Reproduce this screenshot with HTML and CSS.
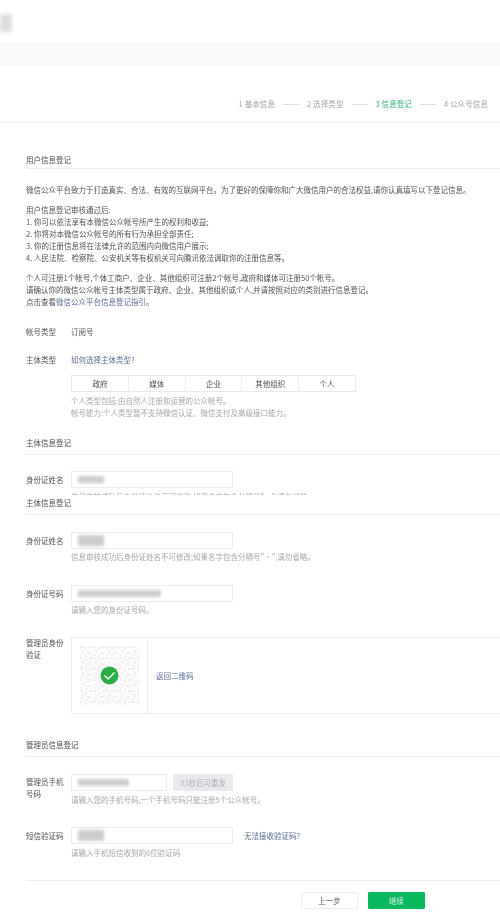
FILE: index.html
```html
<!DOCTYPE html>
<html lang="zh-CN">
<head>
<meta charset="utf-8">
<title>信息登记</title>
<link rel="stylesheet" href="styles.css">
</head>
<body>
<div class="page">
  <header class="head"><span class="logo"></span></header>
  <div class="band"></div>
  <nav class="steps">
    <span>1 基本信息</span><i></i>
    <span>2 选择类型</span><i></i>
    <span class="on">3 信息登记</span><i></i>
    <span>4 公众号信息</span>
  </nav>
  <main class="main">
    <h2 class="title first">用户信息登记</h2>
    <p class="para p1">微信公众平台致力于打造真实、合法、有效的互联网平台。为了更好的保障你和广大微信用户的合法权益,请你认真填写以下登记信息。</p>
    <p class="para p2">用户信息登记审核通过后:<br>1. 你可以依法享有本微信公众帐号所产生的权利和收益;<br>2. 你将对本微信公众帐号的所有行为承担全部责任;<br>3. 你的注册信息将在法律允许的范围内向微信用户展示;<br>4. 人民法院、检察院、公安机关等有权机关可向腾讯依法调取你的注册信息等。</p>
    <p class="para p2">个人可注册1个帐号,个体工商户、企业、其他组织可注册2个帐号,政府和媒体可注册50个帐号。<br>请确认你的微信公众帐号主体类型属于政府、企业、其他组织或个人,并请按照对应的类别进行信息登记。<br>点击查看<a class="link">微信公众平台信息登记指引</a>。</p>

    <div class="row r-type"><label>帐号类型</label><div>订阅号</div></div>
    <div class="row r-subject">
      <label>主体类型</label>
      <div class="col">
        <a class="link">如何选择主体类型?</a>
        <div class="tabs"><span>政府</span><span>媒体</span><span>企业</span><span>其他组织</span><span>个人</span></div>
        <p class="hint h3">个人类型包括:由自然人注册和运营的公众帐号。<br>帐号能力:个人类型暂不支持微信认证、微信支付及高级接口能力。</p>
      </div>
    </div>

    <section class="clip">
      <h2 class="title">主体信息登记</h2>
      <div class="row field f-clip"><label>身份证姓名</label>
        <div class="col"><div class="input"><span class="mask m-name"></span></div>
        <p class="hint h3">信息审核成功后身份证姓名不可修改;如果名字包含分隔号"·",请勿省略。</p></div>
      </div>
    </section>

    <section class="again">
      <h2 class="title">主体信息登记</h2>
      <div class="row field"><label>身份证姓名</label>
        <div class="col"><div class="input"><span class="mask m-tall"></span></div>
        <p class="hint h2">信息审核成功后身份证姓名不可修改;如果名字包含分隔号"·",请勿省略。</p></div>
      </div>
      <div class="row field f-next"><label>身份证号码</label>
        <div class="col"><div class="input"><span class="mask m-id"></span></div>
        <p class="hint h2">请输入您的身份证号码。</p></div>
      </div>
      <div class="row f-qr"><label class="lab-wrap">管理员身份验证</label>
        <div class="qrbox">
          <div class="qrcell">
            <svg class="qr" width="59" height="59" viewBox="0 0 59 59" aria-hidden="true">
              <defs><pattern id="noise" width="13" height="11" patternUnits="userSpaceOnUse">
                <rect x="0" y="0" width="3" height="2" fill="#eeeeee"/>
                <rect x="5" y="1" width="2" height="3" fill="#f1f1f1"/>
                <rect x="9" y="0" width="3" height="2" fill="#ececec"/>
                <rect x="2" y="4" width="2" height="3" fill="#efefef"/>
                <rect x="7" y="6" width="4" height="2" fill="#eeeeee"/>
                <rect x="0" y="8" width="3" height="2" fill="#f2f2f2"/>
                <rect x="5" y="9" width="2" height="2" fill="#efefef"/>
              </pattern></defs>
              <rect width="59" height="59" fill="#fbfbfb"/>
              <rect width="59" height="59" fill="url(#noise)"/>
              <circle cx="29.5" cy="29.5" r="9" fill="#2aae43"/>
              <path d="M24.5 29.5l3.6 3.4 6.4-6.4" fill="none" stroke="#fff" stroke-width="1.4"/>
            </svg>
          </div>
          <a class="link back">返回二维码</a>
        </div>
      </div>
    </section>

    <section class="admin">
      <h2 class="title">管理员信息登记</h2>
      <div class="row field"><label class="lab-wrap">管理员手机号码</label>
        <div class="col">
          <div class="phone"><div class="input short"><span class="mask m-phone"></span></div><span class="resend">33秒后可重发</span></div>
          <p class="hint h3">请输入您的手机号码,一个手机号码只能注册5个公众帐号。</p>
        </div>
      </div>
      <div class="row field f-sms"><label>短信验证码</label>
        <div class="col">
          <div class="phone"><div class="input"><span class="mask m-name tall"></span></div><a class="link nocode">无法接收验证码?</a></div>
          <p class="hint h3">请输入手机短信收到的6位验证码</p>
        </div>
      </div>
    </section>

    <footer class="foot">
      <button class="btn">上一步</button>
      <button class="btn primary">继续</button>
    </footer>
  </main>
</div>
</body>
</html>
```

FILE: styles.css
```css
* { box-sizing: border-box; }
html, body { margin: 0; padding: 0; background: #fff; }
.page {
  width: 500px;
  height: 917px;
  overflow: hidden;
  font: 7.5px/12px "Noto Sans CJK SC", "Liberation Sans", sans-serif;
  color: #505050;
  filter: blur(0.45px);
}
.head { height: 43px; padding-top: 14px; }
.logo { display: block; width: 12px; height: 18px; background: #ddd; filter: blur(2px); }
.band { height: 23px; background: #f7f8f9; }
.steps {
  height: 57px;
  padding: 32px 12px 0 0;
  display: flex;
  justify-content: flex-end;
  align-items: flex-start;
  gap: 8px;
  letter-spacing: 0.1px;
  color: #a3a3a3;
  border-bottom: 2px solid #f5f5f5;
}
.steps i { width: 16px; height: 1px; margin-top: 6px; background: #ddd; }
.steps .on { color: #2bb673; }
.main { padding-left: 26px; }
.title {
  margin: 0;
  font-size: 7.5px;
  font-weight: 400;
  line-height: 12px;
  color: #4a4a4a;
  padding-bottom: 5px;
  border-bottom: 1px solid #eee;
}
.title.first { margin-top: 31px; padding-bottom: 2px; }
.para { margin: 0; }
.p1 { margin-top: 15px; }
.p2 { margin-top: 8px; }
.link { color: #576b95; }
.row { display: flex; }
.row label { width: 45px; flex: none; }
.row .lab-wrap { width: 40px; margin-right: 5px; }
.col { flex: 1; }
.r-type { margin-top: 18px; }
.r-subject { margin-top: 16px; }
.tabs {
  display: flex;
  width: 285px;
  height: 17px;
  margin-top: 9px;
  border: 1px solid #e9e9e9;
}
.tabs span { flex: 1; text-align: center; line-height: 15px; border-left: 1px solid #eee; }
.tabs span:first-child { border-left: 0; }
.hint { margin: 0; color: #a6a6a6; }
.h2 { margin-top: 2px; }
.h3 { margin-top: 3px; }
.clip { height: 58px; margin-top: 18px; overflow: hidden; }
.again { margin-top: 2px; }
.field { margin-top: 17px; }
.f-clip { margin-top: 16px; }
.field label { line-height: 17px; }
.field .lab-wrap { line-height: 12px; margin-top: 2px; }
.f-next { margin-top: 22px; }
.input {
  width: 162px;
  height: 17px;
  padding-left: 6px;
  display: flex;
  align-items: center;
  border: 1px solid #ececec;
}
.input.short { width: 96px; }
.mask { display: block; background: #cdcdcd; filter: blur(1.4px); }
.m-name { width: 26px; height: 7px; }
.m-name.tall, .m-tall { width: 26px; height: 11px; }
.m-id { width: 83px; height: 7px; }
.m-phone { width: 51px; height: 7px; }
.f-qr { margin-top: 21px; margin-right: -2px; }
.qrbox { flex: 1; height: 77px; display: flex; align-items: center; border: 1px solid #eee; }
.qrcell { width: 76px; height: 75px; padding: 8px; flex: none; border-right: 1px solid #eee; }
.qr { display: block; }
.back { margin-left: 8px; }
.admin { margin-top: 25px; }
.phone { display: flex; align-items: center; }
.resend {
  width: 60px;
  height: 17px;
  margin-left: 6px;
  text-align: center;
  line-height: 17px;
  color: #b0b0b8;
  background: #e9eaee;
}
.nocode { margin-left: 11px; }
.f-sms { margin-top: 21px; }
.foot {
  height: 30px;
  margin-top: 21px;
  padding: 11px 75px 0 0;
  display: flex;
  justify-content: flex-end;
  gap: 10px;
  border-top: 1px solid #eee;
}
.btn {
  width: 57px;
  height: 17px;
  padding: 0;
  font: inherit;
  line-height: 15px;
  color: #555;
  background: #fff;
  border: 1px solid #eee;
  border-radius: 1px;
}
.btn.primary { color: #d8f5e4; background: #07b95c; border-color: #07b95c; }
```
